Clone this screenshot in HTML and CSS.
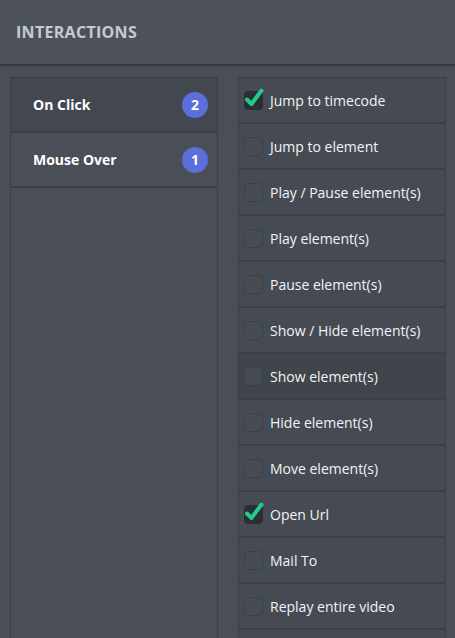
FILE: index.html
```html
<!DOCTYPE html>
<html>
<head>
<meta charset="utf-8">
<link rel="stylesheet" href="styles.css">
</head>
<body>
<div class="header"><span class="title">INTERACTIONS</span></div>
<div class="main">
  <div class="events">
    <div class="event active"><span class="ev-name">On Click</span><span class="badge">2</span></div>
    <div class="event"><span class="ev-name">Mouse Over</span><span class="badge">1</span></div>
  </div>
  <div class="actions">
    <div class="action"><span class="cb checked"><svg viewBox="0 0 20 22" width="20" height="22"><path d="M3 12.5 L7.5 17 L17.5 3.5" fill="none" stroke="#22c98b" stroke-width="4" stroke-linecap="round" stroke-linejoin="round"/></svg></span><span class="label">Jump to timecode</span></div>
    <div class="action"><span class="cb"></span><span class="label">Jump to element</span></div>
    <div class="action"><span class="cb"></span><span class="label">Play / Pause element(s)</span></div>
    <div class="action"><span class="cb"></span><span class="label">Play element(s)</span></div>
    <div class="action"><span class="cb"></span><span class="label">Pause element(s)</span></div>
    <div class="action"><span class="cb"></span><span class="label">Show / Hide element(s)</span></div>
    <div class="action hover"><span class="cb"></span><span class="label">Show element(s)</span></div>
    <div class="action"><span class="cb"></span><span class="label">Hide element(s)</span></div>
    <div class="action"><span class="cb"></span><span class="label">Move element(s)</span></div>
    <div class="action"><span class="cb checked"><svg viewBox="0 0 20 22" width="20" height="22"><path d="M3 12.5 L7.5 17 L17.5 3.5" fill="none" stroke="#22c98b" stroke-width="4" stroke-linecap="round" stroke-linejoin="round"/></svg></span><span class="label">Open Url</span></div>
    <div class="action"><span class="cb"></span><span class="label">Mail To</span></div>
    <div class="action"><span class="cb"></span><span class="label">Replay entire video</span></div>
    <div class="action"></div>
  </div>
</div>
</body>
</html>
```
FILE: styles.css
```css
html, body {
  margin: 0;
  padding: 0;
  height: 100%;
  overflow: hidden;
}
body {
  background: #4a4f57;
  font-family: "Open Sans", "DejaVu Sans", sans-serif;
  color: #f2f3f5;
}
.header {
  height: 64px;
  display: flex;
  align-items: center;
  padding-left: 16px;
  background: #4d525a;
  border-bottom: 2px solid #363a40;
}
.title {
  font-size: 16px;
  font-weight: 700;
  color: #c6cad1;
  letter-spacing: 0.3px;
}
.main {
  display: flex;
  gap: 20px;
  padding: 11px 9px 0 10px;
  height: 600px;
}
.events {
  width: 206px;
  border: 1px solid #3a3e45;
  background: #4a4f57;
}
.event {
  height: 53px;
  border-bottom: 2px solid #3b3f46;
  display: flex;
  align-items: center;
  justify-content: space-between;
  padding: 0 9px 0 22px;
}
.event.active {
  background: #43474f;
}
.ev-name {
  font-size: 14px;
  font-weight: 700;
  color: #ffffff;
}
.badge {
  width: 26px;
  height: 26px;
  border-radius: 50%;
  background: #5a6fd9;
  color: #fff;
  font-size: 14px;
  font-weight: 700;
  display: flex;
  align-items: center;
  justify-content: center;
}
.actions {
  width: 206px;
  border: 1px solid #3a3e45;
  background: #464b53;
}
.action {
  height: 44px;
  border-bottom: 2px solid #3b3f46;
  display: flex;
  align-items: center;
  padding-left: 5px;
  gap: 7px;
}
.action.hover {
  background: #40444b;
}
.cb {
  width: 17px;
  height: 17px;
  border-radius: 4px;
  background: #474b53;
  border: 1px solid #3c4047;
  position: relative;
  flex: none;
}
.cb.checked {
  background: #2d2e35;
  border-color: #2d2e35;
}
.cb svg {
  position: absolute;
  left: -1px;
  top: -5px;
}
.label {
  font-size: 14px;
  color: #f2f3f5;
}
```
